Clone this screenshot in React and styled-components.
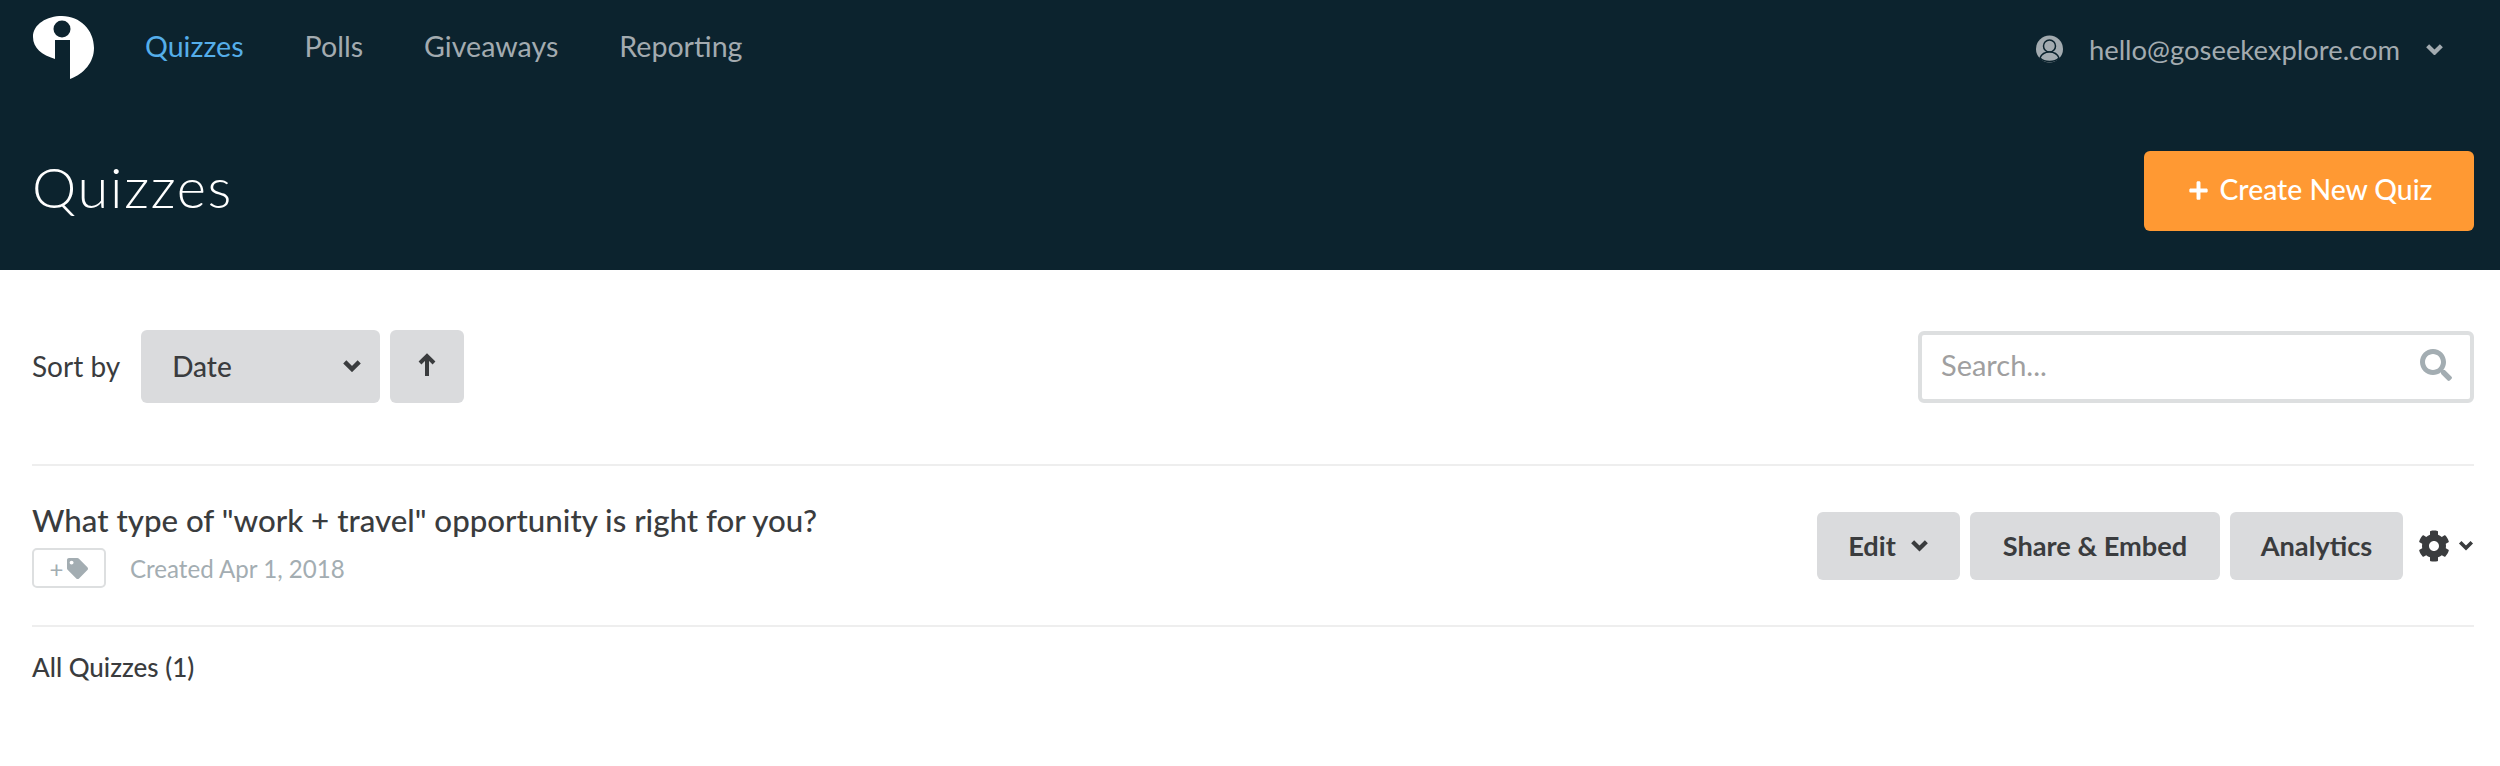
import React from "react";
import styled, { createGlobalStyle } from "styled-components";
import { FaCog, FaPlus, FaSearch, FaTag } from "react-icons/fa";

const GlobalStyle = createGlobalStyle`
  html, body {
    margin: 0;
    padding: 0;
    background: #fff;
    font-family: "Lato", "Open Sans", sans-serif;
    color: #3a3c3e;
  }
`;

const Header = styled.header`
  height: 270px;
  box-sizing: border-box;
  background: #0c232e;
  padding: 15px 26px 0 33px;
`;

const TopBar = styled.div`
  display: flex;
  align-items: flex-start;
  height: 136px;
`;

const Nav = styled.nav`
  display: flex;
  gap: 61px;
  margin-left: 51px;
  padding-top: 15px;
`;

const NavItem = styled.a`
  font-size: 28.6px;
  line-height: 33px;
  color: ${(p) => (p.$active ? "#55aeea" : "#a3abb0")};
`;

const Account = styled.div`
  display: flex;
  align-items: center;
  margin-left: auto;
  height: 34px;
  margin-top: 17px;
  margin-right: 30px;
  color: #a3abb0;
  font-size: 27.4px;
`;

const Email = styled.span`
  margin: 0 25px 0 26px;
`;

const TitleRow = styled.div`
  display: flex;
  justify-content: space-between;
  align-items: flex-start;
`;

const Title = styled.h1`
  margin: 3px 0 0 -1px;
  font-size: 56px;
  font-weight: 300;
  letter-spacing: 1.7px;
  line-height: 66px;
  color: #fff;
`;

const CreateButton = styled.button`
  display: flex;
  align-items: center;
  justify-content: center;
  gap: 11px;
  width: 330px;
  height: 80px;
  padding: 0 0 5px 2px;
  border: 0;
  border-radius: 6px;
  background: #ff9933;
  color: #fff;
  font-family: inherit;
  font-size: 28.3px;
  font-weight: 500;

  svg {
    width: 21px;
    height: 21px;
    margin-top: 3px;
  }
`;

const Main = styled.main`
  padding: 60px 26px 0 32px;
`;

const Toolbar = styled.div`
  display: flex;
  align-items: center;
  height: 73px;
  padding-bottom: 61px;
  border-bottom: 2px solid #eeeeee;
`;

const SortLabel = styled.span`
  font-size: 28px;
  margin: -2px 21px 0 0;
`;

const GreyButton = styled.button`
  display: inline-flex;
  align-items: center;
  justify-content: center;
  box-sizing: border-box;
  border: 0;
  border-radius: 6px;
  background: #dadbdd;
  color: #3a3c3e;
  font-family: inherit;
  font-size: ${(p) => (p.$bold ? "27.2px" : "28px")};
  font-weight: ${(p) => (p.$bold ? 700 : 500)};
  height: ${(p) => (p.$height ? p.$height : "68px")};
  width: ${(p) => p.$width};
  padding: 0;
`;

const SortSelect = styled(GreyButton)`
  justify-content: space-between;
  padding: 0 18px 2px 31px;
  margin-right: 10px;
`;

const ArrowSvg = styled.svg`
  width: 18px;
  height: 24px;
  margin-top: -4px;
`;

const SearchBox = styled.div`
  display: flex;
  align-items: center;
  justify-content: space-between;
  box-sizing: border-box;
  width: 556px;
  height: 72px;
  margin-left: auto;
  padding: 0 18px 4px 19px;
  border: 4px solid #dddfe0;
  border-radius: 6px;
  color: #a09fa0;
  font-size: 29px;

  svg {
    width: 32px;
    height: 32px;
    color: #a3adb2;
  }
`;

const QuizRow = styled.section`
  display: flex;
  align-items: center;
  justify-content: space-between;
  height: 159px;
  border-bottom: 2px solid #eeeeee;
`;

const QuizInfo = styled.div`
  display: flex;
  flex-direction: column;
  gap: 9px;
  margin-top: -2px;
`;

const QuizTitle = styled.h2`
  margin: 0;
  font-size: 31.25px;
  font-weight: 500;
  line-height: 38px;
`;

const Meta = styled.div`
  display: flex;
  align-items: center;
  gap: 24px;
  color: #a3adb2;
  font-size: 24.1px;
`;

const TagButton = styled.span`
  display: inline-flex;
  align-items: center;
  justify-content: center;
  gap: 4px;
  box-sizing: border-box;
  width: 74px;
  height: 40px;
  border: 2px solid #dddfe0;
  border-radius: 5px;
  font-size: 24px;

  svg {
    width: 21px;
    height: 21px;
  }
`;

const Actions = styled.div`
  display: flex;
  align-items: center;
  gap: 10px;
`;

const GearMenu = styled.div`
  display: flex;
  align-items: center;
  margin-left: 5px;
  gap: 8px;
  color: #3a3c3e;
`;

const GearIcon = styled(FaCog)`
  width: 32px;
  height: 32px;
`;

const ChevronSvg = styled.svg`
  flex: none;
  width: ${(p) => p.$size}px;
  height: ${(p) => p.$size * 0.67}px;
  margin-left: ${(p) => p.$gap || 0}px;
`;

const Footer = styled.div`
  margin-top: 25px;
  font-size: 26px;
  font-weight: 500;
  line-height: 30px;
`;

const Chevron = ({ size, gap }) => (
  <ChevronSvg $size={size} $gap={gap} viewBox="0 0 18 12">
    <path d="M2.5 2.500L9 9l6.500-6.500" fill="none" stroke="currentColor" strokeWidth="4" />
  </ChevronSvg>
);

const Logo = () => (
  <svg width="61" height="65" viewBox="33 15 61 65" style={{ display: "block" }}>
    <path
      fill="#fff"
      d="M70 79V40H55V59C42 55 33 48 33 37C33 24 47 16 62 16C80 16 94 30 94 48C94 62 84 74 70 79Z"
    />
    <circle cx="62" cy="29" r="8.5" fill="#0c232e" />
  </svg>
);

const Avatar = () => (
  <svg width="27" height="28" viewBox="0 0 27 28">
    <circle cx="13.5" cy="14" r="13.5" fill="#a3abb0" />
    <circle cx="13.5" cy="11" r="6" fill="#a3abb0" stroke="#0c232e" strokeWidth="1.5" />
    <path d="M4 23c2-5 6-6 9.500-6s7.500 1 9.500 6c-2.500 2.500-6 3.500-9.500 3.500S6.500 25.500 4 23z" fill="#a3abb0" stroke="#0c232e" strokeWidth="1.5" />
  </svg>
);

const UpArrow = () => (
  <ArrowSvg viewBox="0 0 18 24">
    <path d="M9 23V3M2 10l7-7 7 7" fill="none" stroke="currentColor" strokeWidth="4" />
  </ArrowSvg>
);

export default function App() {
  return (
    <>
      <GlobalStyle />
      <Header>
        <TopBar>
          <Logo />
          <Nav>
            <NavItem $active>Quizzes</NavItem>
            <NavItem>Polls</NavItem>
            <NavItem>Giveaways</NavItem>
            <NavItem>Reporting</NavItem>
          </Nav>
          <Account>
            <Avatar />
            <Email>hello@goseekexplore.com</Email>
            <Chevron size={19} />
          </Account>
        </TopBar>
        <TitleRow>
          <Title>Quizzes</Title>
          <CreateButton>
            <FaPlus />
            Create New Quiz
          </CreateButton>
        </TitleRow>
      </Header>
      <Main>
        <Toolbar>
          <SortLabel>Sort by</SortLabel>
          <SortSelect $width="239px" $height="73px">
            Date
            <Chevron size={20} />
          </SortSelect>
          <GreyButton $width="74px" $height="73px">
            <UpArrow />
          </GreyButton>
          <SearchBox>
            Search...
            <FaSearch />
          </SearchBox>
        </Toolbar>
        <QuizRow>
          <QuizInfo>
            <QuizTitle>What type of "work + travel" opportunity is right for you?</QuizTitle>
            <Meta>
              <TagButton>
                +<FaTag />
              </TagButton>
              Created Apr 1, 2018
            </Meta>
          </QuizInfo>
          <Actions>
            <GreyButton $bold $width="143px">
              Edit
              <Chevron size={19} gap={14} />
            </GreyButton>
            <GreyButton $bold $width="250px">
              Share &amp; Embed
            </GreyButton>
            <GreyButton $bold $width="173px">
              Analytics
            </GreyButton>
            <GearMenu>
              <GearIcon />
              <Chevron size={16} />
            </GearMenu>
          </Actions>
        </QuizRow>
        <Footer>All Quizzes (1)</Footer>
      </Main>
    </>
  );
}
